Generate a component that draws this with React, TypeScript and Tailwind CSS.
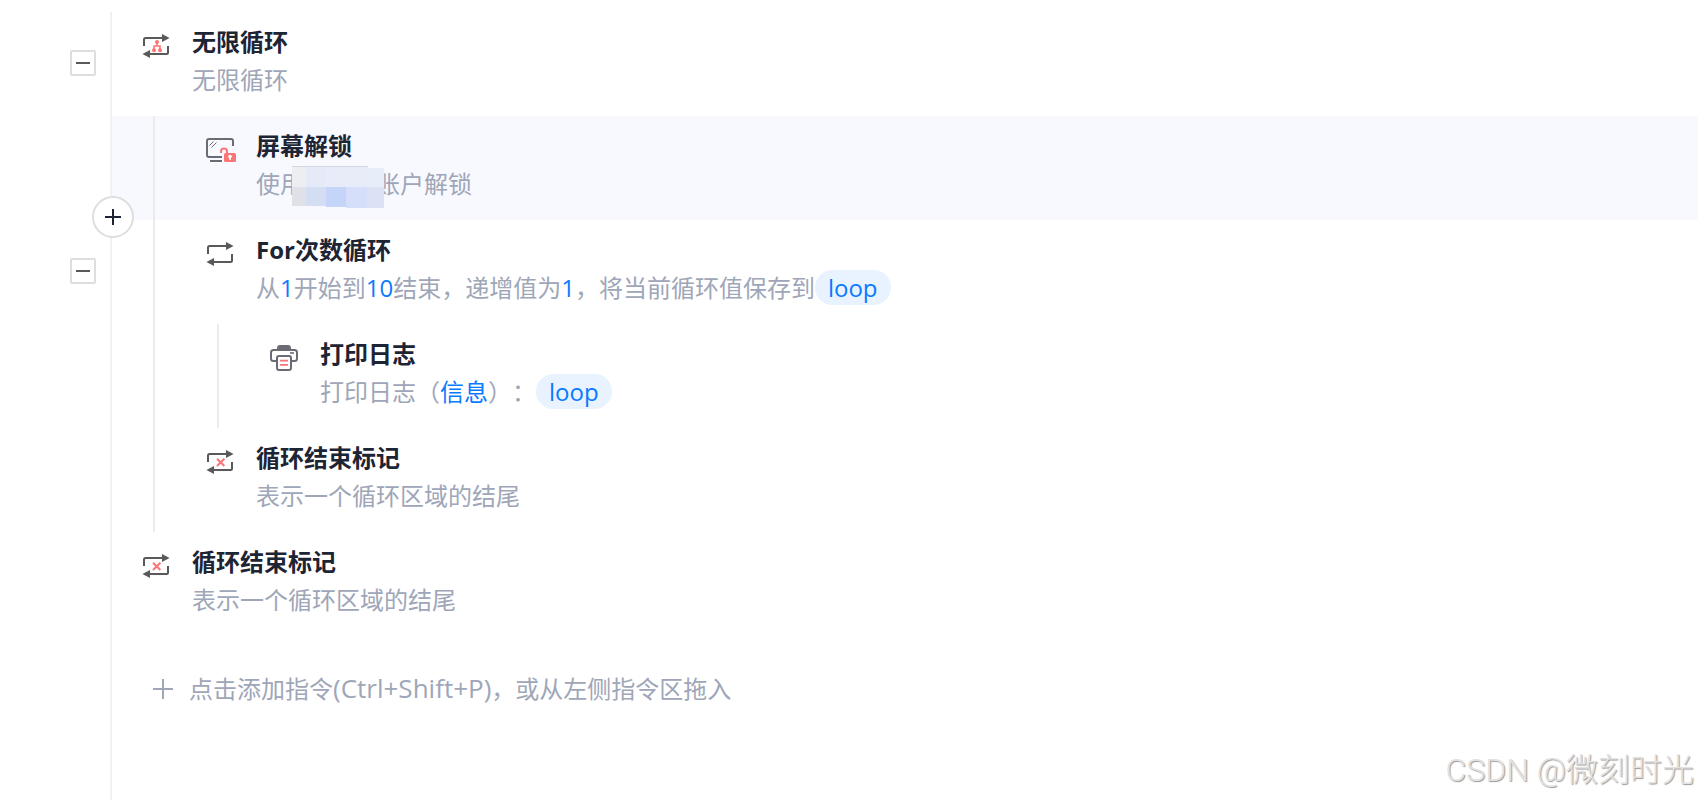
import type { ReactNode } from "react";

interface Step {
  id: number;
  level: number;
  icon: ReactNode;
  title: string;
  detail: ReactNode;
  foldable?: boolean;
  selected?: boolean;
}

function LoopIcon({ children }: { children?: ReactNode }) {
  return (
    <svg viewBox="0 0 30 28" className="h-7 w-[30px] shrink-0" fill="none" aria-hidden="true">
      <path d="M2 14V7.5Q2 6 3.5 6H20" stroke="#595959" strokeWidth="2" />
      <path d="M20 2L27.6 6L20 10Z" fill="#595959" />
      <path d="M26 14V20.5Q26 22 24.5 22H8" stroke="#595959" strokeWidth="2" />
      <path d="M8 18L0.4 22L8 26Z" fill="#595959" />
      {children}
    </svg>
  );
}

function InfiniteLoopIcon() {
  return (
    <LoopIcon>
      <path d="M15 9.5V14M12 18V14H18V18" stroke="#fa7676" strokeWidth="1.6" />
      <circle cx="15" cy="10" r="2" fill="#fa7676" />
      <circle cx="12" cy="18.3" r="2" fill="#fa7676" />
      <circle cx="18" cy="18.3" r="2" fill="#fa7676" />
    </LoopIcon>
  );
}

function LoopEndIcon() {
  return (
    <LoopIcon>
      <path d="M11 10.7L18.4 18M18.4 10.7L11 18" stroke="#fa7676" strokeWidth="2" />
    </LoopIcon>
  );
}

function UnlockIcon() {
  return (
    <svg viewBox="0 0 30 28" className="h-7 w-[30px] shrink-0" fill="none" aria-hidden="true">
      <path d="M27 10V5Q27 3 25 3H3Q1 3 1 5V19Q1 21 3 21H16" stroke="#6b6b75" strokeWidth="2" />
      <path d="M4 25H16" stroke="#6b6b75" strokeWidth="2" />
      <path d="M3.5 9.5L7.5 5.5M5.5 11.5L10.5 6.5" stroke="#6b6b75" strokeWidth="1" />
      <path d="M15 17V15.5A3 3 0 0 1 21 15.5V18" stroke="#fa7676" strokeWidth="2" />
      <rect x="18" y="17" width="12" height="9" rx="1.5" fill="#fa7676" />
      <circle cx="24" cy="20.6" r="1.8" fill="#fff" />
      <path d="M24 20V24" stroke="#fff" strokeWidth="1.6" />
    </svg>
  );
}

function PrintIcon() {
  return (
    <svg viewBox="0 0 30 28" className="h-7 w-[30px] shrink-0" fill="none" aria-hidden="true">
      <path d="M7 5.5V4Q7 1 10 1H18Q21 1 21 4V5.5Z" fill="#6b6b75" />
      <path d="M6 17H3.5Q1 17 1 14.5V8.5Q1 6 3.5 6H24.5Q27 6 27 8.5V14.5Q27 17 24.5 17H22" stroke="#6b6b75" strokeWidth="2" />
      <path d="M20 9H24" stroke="#6b6b75" strokeWidth="1.6" />
      <rect x="7" y="12" width="14" height="14" rx="2" stroke="#6b6b75" strokeWidth="2" />
      <path d="M10 16.7H18M10 20.9H18" stroke="#fa7676" strokeWidth="1.8" />
    </svg>
  );
}

function Mosaic() {
  return (
    <span className="relative inline-block h-6 w-[72px] align-middle">
      <svg viewBox="0 0 92 42" className="absolute -top-[9px] -left-[12px] h-[42px] w-[92px]" shapeRendering="crispEdges" aria-hidden="true">
        <rect width="76" height="21" fill="#e7ecf8" />
        <rect x="76" y="2" width="16" height="19" fill="#e8edfa" />
        <rect width="14" height="21" fill="#eceef2" />
        <rect x="14" width="20" height="21" fill="#e4eaf7" />
        <rect width="76" height="1" fill="#d3d7e2" />
        <rect y="21" width="14" height="19" fill="#dee1e7" />
        <rect x="14" y="21" width="20" height="19" fill="#d4def3" />
        <rect x="34" y="21" width="20" height="20" fill="#c5d4f9" />
        <rect x="54" y="21" width="21" height="21" fill="#d6dff9" />
        <rect x="75" y="21" width="17" height="21" fill="#dce2f6" />
      </svg>
    </span>
  );
}

function Value({ children }: { children: ReactNode }) {
  return <span className="text-[#0a7aff]">{children}</span>;
}

function Variable({ name }: { name: string }) {
  return (
    <span className="inline-block h-[35px] rounded-full bg-[#e9f2ff] px-[13px] leading-[35px] text-[#0a7aff]">
      {name}
    </span>
  );
}

const steps: Step[] = [
  { id: 1, level: 0, icon: <InfiniteLoopIcon />, title: "无限循环", detail: "无限循环", foldable: true },
  {
    id: 2,
    level: 1,
    icon: <UnlockIcon />,
    title: "屏幕解锁",
    detail: <>使用<Mosaic />账户解锁</>,
    selected: true,
  },
  {
    id: 3,
    level: 1,
    icon: <LoopIcon />,
    title: "For次数循环",
    detail: (
      <>
        从<Value>1</Value>开始到<Value>10</Value>结束，递增值为<Value>1</Value>，将当前循环值保存到
        <Variable name="loop" />
      </>
    ),
    foldable: true,
  },
  {
    id: 4,
    level: 2,
    icon: <PrintIcon />,
    title: "打印日志",
    detail: <>打印日志（<Value>信息</Value>）：<Variable name="loop" /></>,
  },
  { id: 5, level: 1, icon: <LoopEndIcon />, title: "循环结束标记", detail: "表示一个循环区域的结尾" },
  { id: 6, level: 0, icon: <LoopEndIcon />, title: "循环结束标记", detail: "表示一个循环区域的结尾" },
];

function StepRow({ step }: { step: Step }) {
  return (
    <li className="relative flex min-h-26">
      {/* Gutter */}
      <div className="flex w-[110px] shrink-0 items-center justify-end pr-[14px] pb-[2px]">
        {step.foldable && (
          <button
            type="button"
            aria-label="折叠"
            className="flex size-[26px] items-center justify-center rounded-xs border-2 border-[#dedede] bg-white"
          >
            <span className="h-[2px] w-[14px] bg-[#595959]" />
          </button>
        )}
      </div>

      <div className={`flex flex-1 border-l-2 border-[#f0f0f7] ${step.selected ? "bg-[#f8f9fe]" : ""}`}>
        {Array.from({ length: step.level }, (_, i) => (
          <div key={i} className="w-16 shrink-0 pl-[41px]">
            <div className="h-full w-[2px] bg-[#ebebeb]" />
          </div>
        ))}
        <div className="flex gap-5 pt-[11px] pl-[30px]">
          <div className="pt-[9px]">{step.icon}</div>
          <div className="leading-[38px] whitespace-nowrap">
            <h3 className="font-bold text-[#1d2433]">{step.title}</h3>
            <p className="h-[38px] text-[#9ea6b8]">{step.detail}</p>
          </div>
        </div>
      </div>

      {/* Insert after the selected step */}
      {step.selected && (
        <button
          type="button"
          aria-label="插入指令"
          className="absolute -bottom-[18px] left-[92px] z-10 flex size-[42px] items-center justify-center rounded-full border-2 border-[#dedede] bg-white"
        >
          <svg viewBox="0 0 16 16" className="size-4" stroke="#1d2433" strokeWidth="2" aria-hidden="true">
            <path d="M8 0V16M0 8H16" />
          </svg>
        </button>
      )}
    </li>
  );
}

export default function App() {
  return (
    <main className="relative flex min-h-screen flex-col bg-white pt-3 font-['Open_Sans','Noto_Sans_CJK_SC',sans-serif] text-2xl [text-spacing-trim:space-all]">
      <ul>
        {steps.map((step) => (
          <StepRow key={step.id} step={step} />
        ))}
      </ul>

      <div className="ml-[110px] flex-1 border-l-2 border-[#f0f0f7] pt-[33px] pl-[41px]">
        <button type="button" className="flex items-center gap-4 leading-[38px] whitespace-nowrap text-[#9ea6b8]">
          <svg viewBox="0 0 20 20" className="size-5" stroke="currentColor" strokeWidth="2" aria-hidden="true">
            <path d="M10 0V20M0 10H20" />
          </svg>
          <span>
            点击添加指令<span className="text-[26px]">(Ctrl+Shift+P)</span>，或从左侧指令区拖入
          </span>
        </button>
      </div>

      <div className="absolute right-1 bottom-2 font-['Roboto','Noto_Sans_CJK_SC',sans-serif] text-[32px] leading-[44px] font-light text-[#e2e2e2] [text-shadow:1px_1px_1px_#999]">
        CSDN @微刻时光
      </div>
    </main>
  );
}
